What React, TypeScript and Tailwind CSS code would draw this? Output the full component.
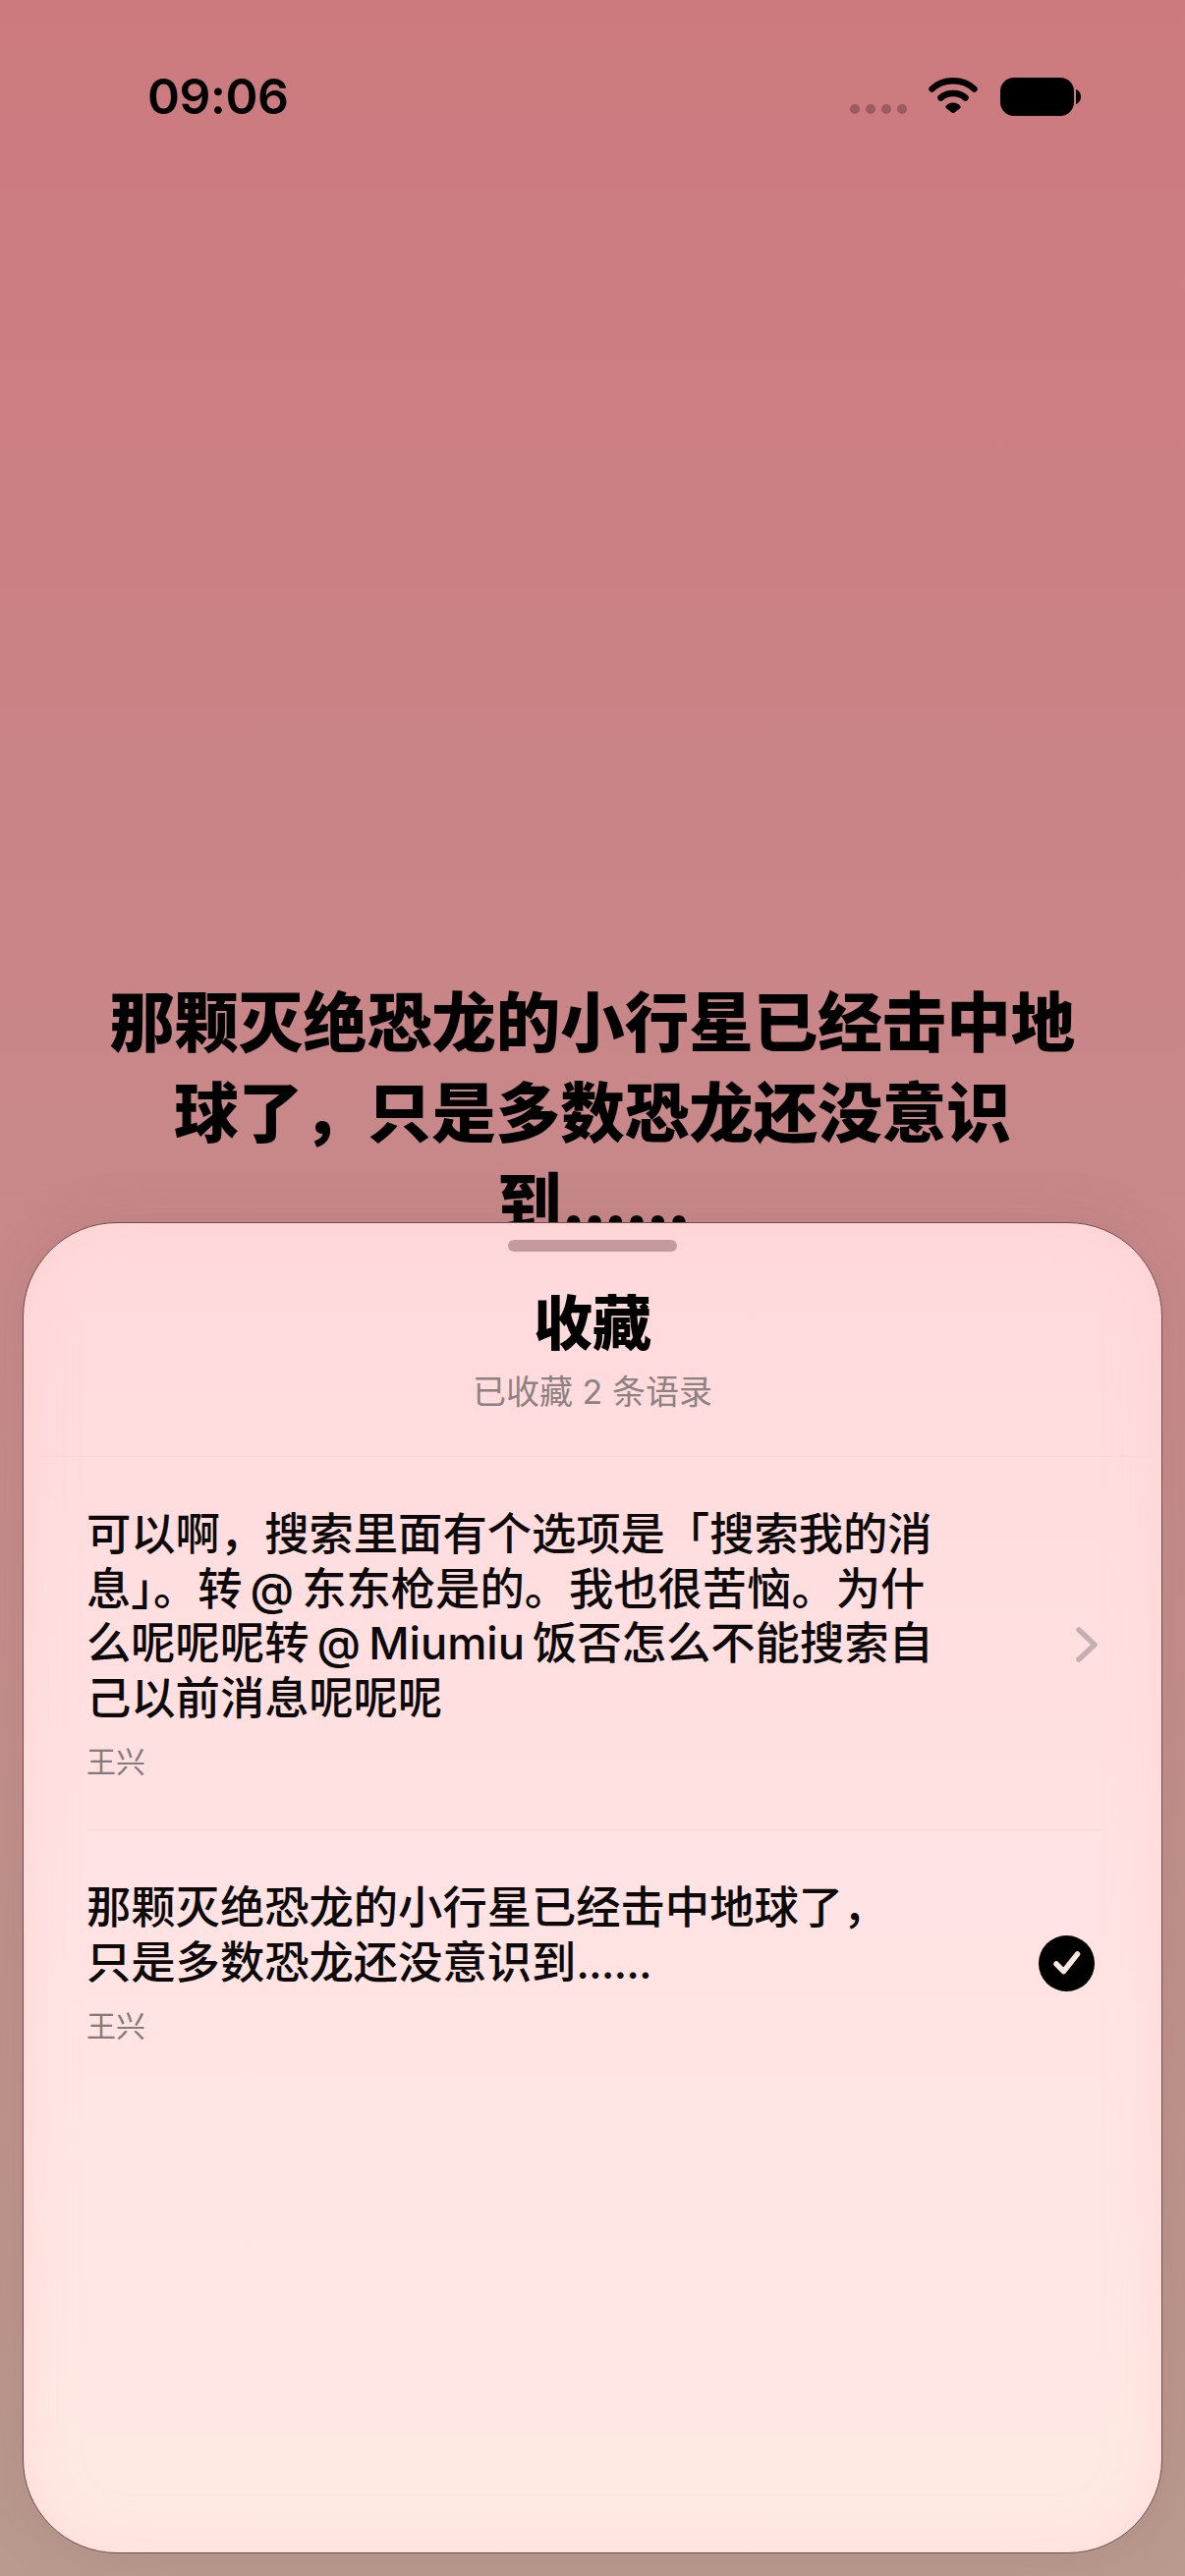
const fontStack = "font-['Inter','Noto_Sans_CJK_SC',sans-serif]";

function StatusIcons() {
	return (
		<div className="flex items-start">
			<div className="mt-[27px] flex gap-[6px]">
				<span className="h-[10px] w-[10px] rounded-full bg-black/25" />
				<span className="h-[10px] w-[10px] rounded-full bg-black/25" />
				<span className="h-[10px] w-[10px] rounded-full bg-black/25" />
				<span className="h-[10px] w-[10px] rounded-full bg-black/25" />
			</div>
			<svg className="ml-[22px]" width="50" height="36" viewBox="0 0 50 36">
				<path d="M3.5 11.5C15 0.5 35 0.5 46.5 11.5" fill="none" stroke="#000" strokeWidth="6.5" strokeLinecap="round" />
				<path d="M12.5 20.5C19 14.5 31 14.5 37.5 20.5" fill="none" stroke="#000" strokeWidth="6.5" strokeLinecap="round" />
				<path d="M18 28.5C21.5 24.5 28.5 24.5 32 28.5C33 29.5 33 30.2 32 31.2L26.5 35.4C25.6 36.1 24.4 36.1 23.5 35.4L18 31.2C17 30.2 17 29.5 18 28.5Z" fill="#000" />
			</svg>
			<svg className="ml-[23px]" width="82" height="39" viewBox="0 0 82 39">
				<rect x="0" y="0" width="75" height="39" rx="14" fill="#000" />
				<path d="M77 12C80 13 82 16 82 19.5C82 23 80 26 77 27Z" fill="#000" />
			</svg>
		</div>
	);
}

function Quote({
	lines,
	name,
	children,
}: {
	lines: React.ReactNode;
	name: string;
	children?: React.ReactNode;
}) {
	return (
		<div className="flex items-center justify-between">
			<div className="w-[870px]">
				<p className="text-[45.3px] leading-[55.5px] font-medium whitespace-pre-line text-[#0c0a0a] [word-spacing:-4px]">
					{lines}
				</p>
				<p className="mt-[17px] text-[30px] leading-[40px] text-[#857979]">{name}</p>
			</div>
			{children}
		</div>
	);
}

export default function App() {
	return (
		<div
			lang="zh-CN"
			className={`flex h-[2622px] w-[1206px] flex-col overflow-hidden bg-linear-to-b from-[#cc7a7e] via-[#c98689] via-40% to-[#b89a8e] ${fontStack}`}
		>
			{/* Status bar and headline */}
			<div className="h-[1244px] shrink-0 overflow-hidden">
				<div className="flex h-[79px] items-start justify-between pt-[63px] pr-[106px] pl-[150px]">
					<span className="text-[50px] leading-[70px] font-semibold tracking-[-0.5px] text-black">09:06</span>
					<div className="pt-[16px]">
						<StatusIcons />
					</div>
				</div>
				<h1 className="mx-auto mt-[917px] w-[1000px] text-center text-[65.5px] leading-[92px] font-black text-black">
					那颗灭绝恐龙的小行星已经击中地球了，只是多数恐龙还没意识到<span className="tracking-[-3px]">......</span>
				</h1>
			</div>

			{/* Favourites sheet */}
			<div className="mx-[23px] h-[1355px] shrink-0 rounded-[96px] border border-[#6f4b4e] bg-linear-to-b from-[#ffd9db] via-[#ffe2e3] to-[#ffeae3] shadow-[0_0_60px_rgba(120,60,60,0.12),inset_0_0_50px_rgba(255,205,205,0.55)]">
				<div className="flex justify-center pt-[17px]">
					<div className="h-[12px] w-[172px] rounded-[6px] bg-[#c49a9f]" />
				</div>
				<div className="flex h-[209px] flex-col items-center border-b border-[#f8d8d9]">
					<h2 className="mt-[33px] text-[60px] leading-[80px] font-black text-black">收藏</h2>
					<p className="mt-[8px] text-[34px] leading-[44px] text-[#8d8182]">已收藏 2 条语录</p>
				</div>
				<div className="pr-[62px] pl-[64px]">
					<div className="border-b border-[#f5d9d9] pt-[51px] pb-[49px]">
						<Quote
							lines="可以啊，搜索里面有个选项是「搜索我的消息」。转 @ 东东枪是的。我也很苦恼。为什么呢呢呢转 @ Miumiu 饭否怎么不能搜索自己以前消息呢呢呢"
							name="王兴"
						>
							<svg className="mr-[3px]" width="22" height="36" viewBox="0 0 22 36">
								<path d="M3 3L19 18L3 33" fill="none" stroke="#c5b0b1" strokeWidth="5.5" strokeLinecap="round" strokeLinejoin="round" />
							</svg>
						</Quote>
					</div>
					<div className="pt-[51px]">
						<Quote
							lines={
								<>
									{"那颗灭绝恐龙的小行星已经击中地球了，\n只是多数恐龙还没意识到"}
									<span className="tracking-[-1px]">......</span>
								</>
							}
							name="王兴"
						>
							<div className="mr-[6px] flex h-[57px] w-[57px] items-center justify-center rounded-full bg-black">
								<svg width="30" height="26" viewBox="0 0 30 26">
									<path d="M4 14L11.5 21.5L25.5 4" fill="none" stroke="#ffe6e6" strokeWidth="5.5" strokeLinecap="round" strokeLinejoin="round" />
								</svg>
							</div>
						</Quote>
					</div>
				</div>
			</div>
		</div>
	);
}
